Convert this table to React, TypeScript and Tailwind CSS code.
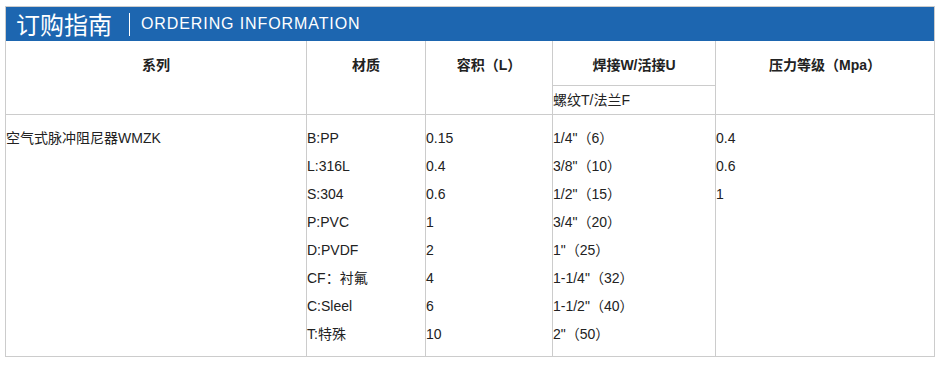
import React from 'react';

const materials = ['B:PP', 'L:316L', 'S:304', 'P:PVC', 'D:PVDF', 'CF：衬氟', 'C:Sleel', 'T:特殊'];
const volumes = ['0.15', '0.4', '0.6', '1', '2', '4', '6', '10'];
const sizes = ['1/4"（6）', '3/8"（10）', '1/2"（15）', '3/4"（20）', '1"（25）', '1-1/4"（32）', '1-1/2"（40）', '2"（50）'];
const pressures = ['0.4', '0.6', '1'];

const font = { fontFamily: '"Liberation Sans", "Noto Sans CJK SC", sans-serif' };

const Lines = ({ items }: { items: string[] }) => (
  <div className="pt-[9px] pb-[8px]">
    {items.map((t) => (
      <div key={t} className="leading-[28px] whitespace-nowrap">
        {t}
      </div>
    ))}
  </div>
);

export default function App() {
  return (
    <div className="bg-white w-[940px] h-[368px] pt-[6px] pl-[5px]" style={font}>
      <div className="w-[930px] border border-[#cccccc]">
        <div className="h-[34px] bg-[#1d66b0] flex items-center text-white">
          <span
            className="pl-[10px] text-[24px] leading-none"
            style={{ fontFamily: '"Noto Sans CJK SC", sans-serif' }}
          >
            订购指南
          </span>
          <span className="ml-[17px] w-px h-[23px] bg-white" />
          <span className="ml-[11px] text-[16px] tracking-[0.9px] leading-none">ORDERING INFORMATION</span>
        </div>

        <div className="grid grid-cols-[301px_119px_127px_163px_218px] grid-rows-[45px_29px_auto] text-[14px] text-[#222]">
          <div className="row-span-2 border-r border-b border-[#cccccc] text-center font-bold pt-[14px] leading-[20px]">
            系列
          </div>
          <div className="row-span-2 border-r border-b border-[#cccccc] text-center font-bold pt-[14px] leading-[20px]">
            材质
          </div>
          <div className="row-span-2 border-r border-b border-[#cccccc] text-center font-bold pt-[14px] leading-[20px]">
            容积（L）
          </div>
          <div className="border-r border-b border-[#cccccc] text-center font-bold pt-[14px] leading-[20px]">
            焊接W/活接U
          </div>
          <div className="row-span-2 border-b border-[#cccccc] text-center font-bold pt-[14px] leading-[20px]">
            压力等级（Mpa）
          </div>
          <div className="col-start-4 row-start-2 border-r border-b border-[#cccccc] leading-[28px]">
            螺纹T/法兰F
          </div>

          <div className="border-r border-[#cccccc]">
            <Lines items={['空气式脉冲阻尼器WMZK']} />
          </div>
          <div className="border-r border-[#cccccc]">
            <Lines items={materials} />
          </div>
          <div className="border-r border-[#cccccc]">
            <Lines items={volumes} />
          </div>
          <div className="border-r border-[#cccccc]">
            <Lines items={sizes} />
          </div>
          <div>
            <Lines items={pressures} />
          </div>
        </div>
      </div>
    </div>
  );
}
